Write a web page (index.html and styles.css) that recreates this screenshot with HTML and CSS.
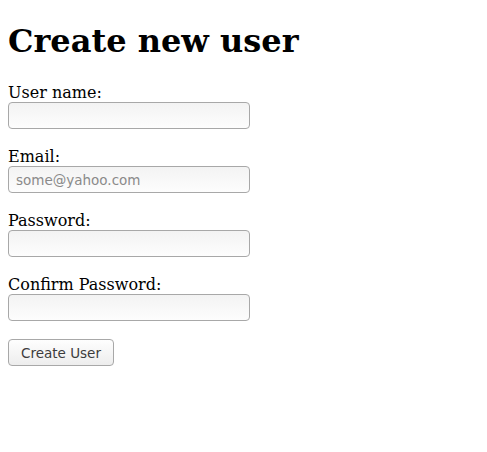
FILE: index.html
```html
<!DOCTYPE html>
<html>
<head>
<meta charset="utf-8">
<title>Create new user</title>
<link rel="stylesheet" href="styles.css">
</head>
<body>
<h1 class="title">Create new user</h1>
<form class="form">
  <div class="field">
    <label class="label" for="u">User name:</label>
    <input class="input" id="u" type="text">
  </div>
  <div class="field">
    <label class="label" for="e">Email:</label>
    <input class="input" id="e" type="text" placeholder="some@yahoo.com">
  </div>
  <div class="field">
    <label class="label" for="p">Password:</label>
    <input class="input" id="p" type="password">
  </div>
  <div class="field">
    <label class="label" for="c">Confirm Password:</label>
    <input class="input" id="c" type="password">
  </div>
  <div class="actions">
    <button class="button" type="button">Create User</button>
  </div>
</form>
</body>
</html>
```
FILE: styles.css
```css
html, body {
  margin: 0;
  padding: 0;
  background: #fff;
}
body {
  padding: 8px;
  font-family: "DejaVu Serif", serif;
  font-size: 16px;
  color: #000;
}
.title {
  font-family: "DejaVu Serif", serif;
  font-size: 32px;
  font-weight: bold;
  line-height: 37px;
  margin: 15px 0 23px 0;
}
.form {
  display: flex;
  flex-direction: column;
  gap: 18px;
  margin-top: 0;
}
.field {
  display: flex;
  flex-direction: column;
  align-items: flex-start;
}
.label {
  line-height: 19px;
  height: 19px;
}
.input {
  box-sizing: border-box;
  width: 242px;
  height: 27px;
  margin: 0;
  padding: 0 7px;
  border: 1px solid #a8a8a8;
  border-radius: 4px;
  background: linear-gradient(to bottom, #f3f3f3, #fdfdfd);
  font-family: "DejaVu Sans", sans-serif;
  font-size: 13.5px;
  color: #333;
}
.input::placeholder {
  color: #8a8a8a;
}
.actions {
  display: flex;
  padding-top: 0;
}
.button {
  box-sizing: border-box;
  width: 106px;
  height: 27px;
  margin: 0;
  padding: 0;
  border: 1px solid #a8a8a8;
  border-radius: 4px;
  background: linear-gradient(to bottom, #fefefe, #ededed);
  font-family: "DejaVu Sans", sans-serif;
  font-size: 13.5px;
  color: #3c3c3c;
}
```
